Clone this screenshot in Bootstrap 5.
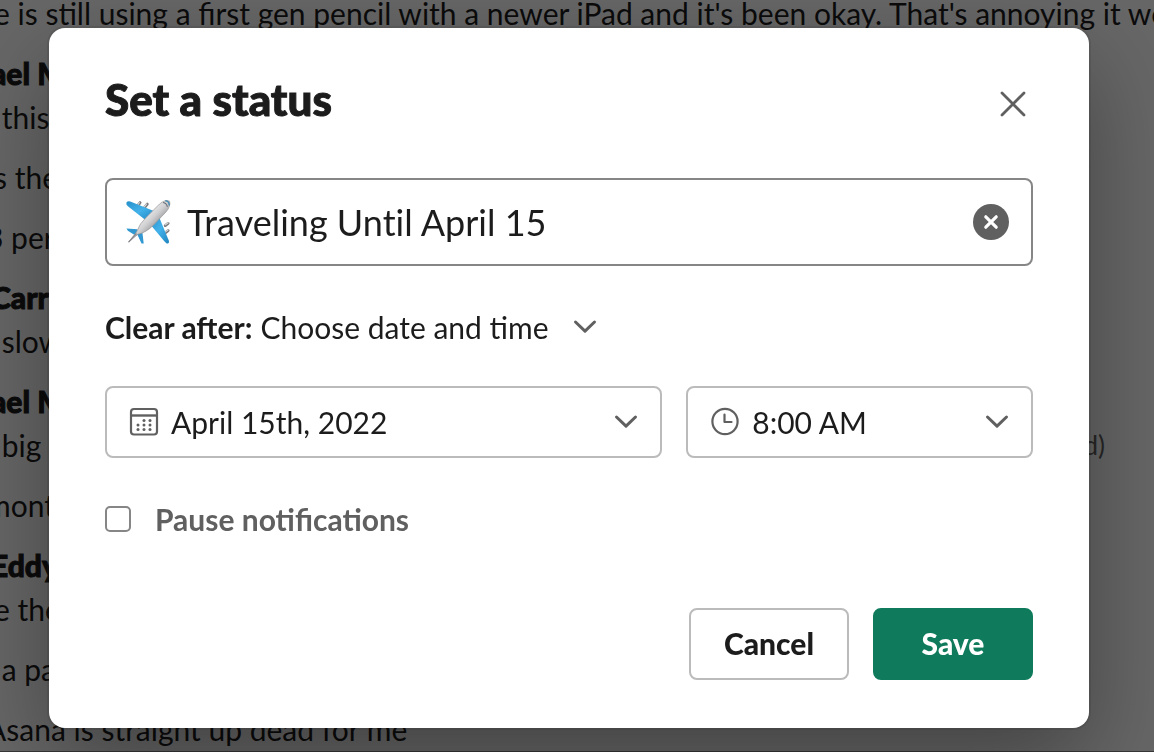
<!DOCTYPE html>
<html lang="en">
<head>
<meta charset="utf-8">
<meta name="viewport" content="width=device-width, initial-scale=1">
<title>Set a status</title>
<link href="https://cdn.jsdelivr.net/npm/bootstrap@5.3.0/dist/css/bootstrap.min.css" rel="stylesheet">
<style>
  :root { --ink: #1d1c1d; --muted: #616061; --line: #bbb; --green: #0f7b5c; }
  body { font-family: Lato, "Noto Sans", sans-serif; font-size: 30px; line-height: 44px; color: var(--ink); background: #fff; }

  /* conversation behind the dialog, scrolled to its newest message */
  .chat-log { border-bottom: 1px solid #888; white-space: nowrap; gap: 16px; margin-left: -6px; }
  .chat-log p { margin: 0; }
  .chat-log .tucked { margin-left: -8px; }
  .chat-log .author { margin-left: -3px; }
  .author, .status-title { font-weight: 900; -webkit-text-stroke: 1px currentColor; }
  .edited { color: var(--muted); font-size: 26px; right: 49px; }

  .scrim { background: rgba(0,0,0,.6); padding-right: 16px; }
  .status-dialog { max-width: 1040px; margin: 28px auto; }
  .status-sheet { border: 0; border-radius: 16px; padding: 44px 56px 48px; color: var(--ink);
    box-shadow: 0 0 0 2px rgba(29,28,29,.13), 0 36px 96px rgba(0,0,0,.35); }
  .status-title { font-size: 44px; line-height: 54px; }
  .plain-btn { border: 0; background: none; padding: 0; line-height: 0; }
  .close-btn { padding: 18px 6px 0; }

  .status-box { height: 88px; border: 2px solid #868686; border-radius: 8px; padding: 0 22px 0 18px; gap: 16px; margin-top: 52px; }
  .status-box input, .pick select, .clear-row select { border: 0; background-color: transparent; padding: 0; outline: 0; box-shadow: none; color: var(--ink); }
  .status-box input { font-size: 36px; line-height: 44px; font-variant-ligatures: none; }

  select.bare { appearance: none; font-size: 30px; line-height: 44px; border-radius: 0;
    background: url("data:image/svg+xml,%3Csvg xmlns='http://www.w3.org/2000/svg' width='24' height='16' viewBox='0 0 24 16'%3E%3Cpath d='M2.5 3 12 12.2 21.500 3' fill='none' stroke='%23616061' stroke-width='3' stroke-linecap='round' stroke-linejoin='round'/%3E%3C/svg%3E") no-repeat right center; }
  .clear-row { margin-top: 39px; gap: 8px; }
  .clear-row select.bare { padding-right: 48px; }
  .pickers { display: grid; grid-template-columns: 45fr 28fr; gap: 24px; margin-top: 37px; }
  .pick { height: 72px; border: 2px solid var(--line); border-radius: 8px; padding: 0 22px; gap: 12px; }
  .pause-row { margin-top: 39px; gap: 24px; color: var(--muted); font-weight: 700; }
  .pause-row input { appearance: none; width: 26px; height: 26px; margin: 0; border: 2px solid #868686; border-radius: 5px; background: #fff; }
  .pause-row input:checked { background: var(--green); }
  .actions { margin-top: 67px; gap: 24px; }
  .actions .btn { min-width: 160px; height: 72px; border: 2px solid var(--line); border-radius: 8px; font-size: 30px; line-height: 42px; font-weight: 900; padding: 0 24px 2px; color: var(--ink); }
  .actions .save-btn { background: var(--green); border-color: var(--green); color: #fff; }
</style>
</head>
<body class="overflow-hidden">
<main class="chat-log vh-100 d-flex flex-column justify-content-end overflow-hidden" aria-hidden="true">
  <p>e is still using a first gen pencil with a newer iPad and it's been okay. That's annoying it works</p>
  <div><p class="author">ael M</p><p>&nbsp;this</p></div>
  <p>s the</p>
  <p class="tucked">3 per</p>
  <div><p class="author">Carr</p><p>&nbsp;slow</p></div>
  <div class="position-relative"><p class="author">ael M</p><p>&nbsp;big</p><span class="edited position-absolute bottom-0">(edited)</span></div>
  <p class="tucked">month</p>
  <div><p class="author">Eddy</p><p>e the</p></div>
  <p>&nbsp;a pa</p>
  <p class="tucked">Asana is straight up dead for me</p>
</main>

<div class="modal show d-block scrim" tabindex="-1" role="dialog" aria-labelledby="dialogTitle">
  <div class="modal-dialog status-dialog">
    <form class="modal-content status-sheet">
      <div class="d-flex justify-content-between align-items-start">
        <h1 class="status-title mb-0" id="dialogTitle">Set a status</h1>
        <button type="button" class="plain-btn close-btn" aria-label="Close">
          <svg width="28" height="28" viewBox="0 0 28 28" fill="none" stroke="#616061" stroke-width="2.8" stroke-linecap="round"><path d="M3 3 25 25M25 3 3 25"/></svg>
        </button>
      </div>

      <div class="status-box d-flex align-items-center">
        <svg class="flex-shrink-0" width="46" height="46" viewBox="0 0 64 64" aria-hidden="true">
          <defs>
            <linearGradient id="hull" x1="0" y1="0" x2="1" y2="1"><stop offset=".25" stop-color="#fff"/><stop offset=".5" stop-color="#d0d0d2"/><stop offset=".75" stop-color="#77777b"/></linearGradient>
            <linearGradient id="wing" x1="0" y1="0" x2="1" y2="1"><stop offset="0" stop-color="#258fca"/><stop offset=".5" stop-color="#43b2ea"/><stop offset="1" stop-color="#1e83be"/></linearGradient>
          </defs>
          <g stroke="#7b7b7e" stroke-width="4" stroke-linecap="round"><path d="M18 9 21 5M27 12 31 7M56 37 60 34M56 47 60 44"/></g>
          <g stroke="#dedee0" stroke-width="1.500" stroke-linecap="round"><path d="M18 8 20 5M27 11 30 7M56 36 60 33M56 46 60 43"/></g>
          <path d="M2 5Q4 2 9 4L41 17 28 29 4 10Q1 8 2 5Z" fill="url(#wing)"/>
          <path d="M47 24 61 58Q62 62 58 62L55 59 35 35Z" fill="url(#wing)"/>
          <path d="M2 41 17 42 21 48 15 51 4 44ZM17 49 24 45 26 62 23 62Z" fill="#3198d2"/>
          <path d="M5 60 16 46Q20 34 31 24L48 7Q56 0 62 3Q64 10 57 18L40 36Q29 47 18 49Z" fill="url(#hull)" stroke="#929296" stroke-width=".9"/>
          <path d="M5 60 16 48" stroke="#88888c" stroke-width="1.800"/>
          <path d="M56 2.500Q62 3 61.500 9" fill="none" stroke="#4389b1" stroke-width="2"/>
          <path d="M53 5Q58 6 59 11" fill="none" stroke="#666b72" stroke-width="1.400"/>
        </svg>
        <input class="flex-grow-1" type="text" value="Traveling Until April 15" aria-label="Status">
        <button type="button" class="plain-btn" aria-label="Clear status">
          <svg width="36" height="36" viewBox="0 0 36 36"><circle cx="18" cy="18" r="18" fill="#616061"/><path d="M12.800 12.800 23.200 23.200M23.200 12.800 12.800 23.200" stroke="#fff" stroke-width="3.2" stroke-linecap="round"/></svg>
        </button>
      </div>

      <div class="clear-row d-flex align-items-center">
        <label class="fw-bold" for="clearAfter">Clear after:</label>
        <select id="clearAfter" class="bare"><option>Choose date and time</option></select>
      </div>

      <div class="pickers">
        <div class="pick d-flex align-items-center">
          <svg class="flex-shrink-0" width="30" height="30" viewBox="0 0 30 30" aria-hidden="true">
            <g fill="none" stroke="#616061" stroke-width="2.200"><rect x="2" y="2" width="26" height="25.500" rx="3"/><path d="M2 8.500H28" stroke-width="2.400"/></g>
            <g fill="#616061"><circle cx="15" cy="13.500" r="1.500"/><circle cx="21" cy="13.500" r="1.500"/><circle cx="9" cy="18" r="1.500"/><circle cx="15" cy="18" r="1.500"/><circle cx="21" cy="18" r="1.500"/><circle cx="9" cy="22.500" r="1.500"/><circle cx="15" cy="22.500" r="1.500"/><circle cx="21" cy="22.500" r="1.500"/></g>
          </svg>
          <select class="bare flex-grow-1" aria-label="Date"><option>April 15th, 2022</option></select>
        </div>
        <div class="pick d-flex align-items-center">
          <svg class="flex-shrink-0" width="30" height="30" viewBox="0 0 30 30" fill="none" stroke="#616061" stroke-width="2.200" aria-hidden="true"><circle cx="15" cy="14.500" r="12.600"/><path d="M14.500 7.500V15H21.500" stroke-linecap="round" stroke-linejoin="round"/></svg>
          <select class="bare flex-grow-1" aria-label="Time"><option>8:00 AM</option></select>
        </div>
      </div>

      <div class="pause-row d-flex align-items-center">
        <input type="checkbox" id="pause">
        <label for="pause">Pause notifications</label>
      </div>

      <div class="actions d-flex justify-content-end">
        <button type="button" class="btn">Cancel</button>
        <button type="submit" class="btn save-btn">Save</button>
      </div>
    </form>
  </div>
</div>
<script src="https://cdn.jsdelivr.net/npm/bootstrap@5.3.0/dist/js/bootstrap.bundle.min.js"></script>
</body>
</html>
